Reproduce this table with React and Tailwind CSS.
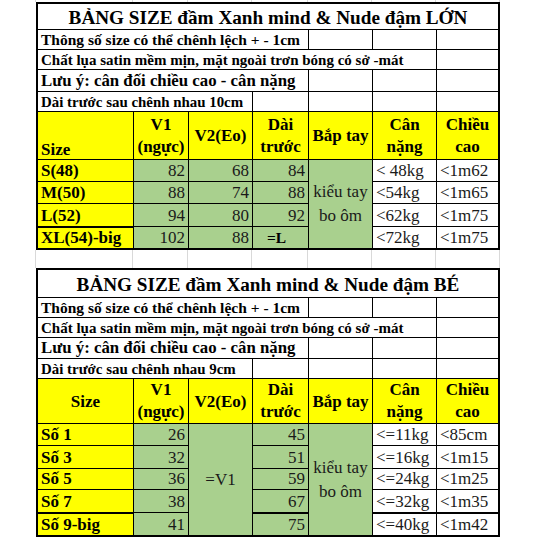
import React from "react";

const Y = "bg-[#ffff00]";
const G = "bg-[#a9d08e]";
const W = "bg-white";

function Cell({ className = "", children }) {
  return <div className={`flex min-w-0 overflow-visible whitespace-nowrap ${className}`}>{children}</div>;
}

function Gap({ h }) {
  return (
    <div className={`flex ${h}`}>
      <div className="w-[36px] border-r border-[#d9d9d9]" />
      <div className="w-[97px] border-r border-[#d9d9d9]" />
      <div className="w-[55px] border-r border-[#d9d9d9]" />
      <div className="w-[64px] border-r border-[#d9d9d9]" />
      <div className="w-[56px] border-r border-[#d9d9d9]" />
      <div className="w-[64px] border-r border-[#d9d9d9]" />
      <div className="w-[64px] border-r border-[#d9d9d9]" />
      <div className="w-[64px] border-r border-[#d9d9d9]" />
    </div>
  );
}

function InfoRows({ dai, cm }) {
  return (
    <>
      <Cell className={`${W} col-span-7 items-center justify-center text-[19.2px] font-bold leading-none pt-[2px]`}>
        BẢNG SIZE đầm Xanh mind &amp; Nude đậm {dai}
      </Cell>
      <Cell className={`${W} col-span-4 items-end pl-[3px] text-[15.5px] font-bold leading-[18px]`}>
        Thông số size có thể chênh lệch + - 1cm
      </Cell>
      <Cell className={W} />
      <Cell className={W} />
      <Cell className={W} />
      <Cell className={`${W} col-span-6 items-end pl-[3px] text-[15px] font-bold leading-[18px]`}>
        Chất lụa satin mềm mịn, mặt ngoài trơn bóng có sở -mát
      </Cell>
      <Cell className={W} />
      <Cell className={`${W} col-span-4 items-end pl-[3px] text-[16.8px] font-bold leading-[20px]`}>
        Lưu ý: cân đối chiều cao - cân nặng
      </Cell>
      <Cell className={W} />
      <Cell className={W} />
      <Cell className={W} />
      <Cell className={`${W} col-span-3 items-end pl-[3px] text-[14.9px] font-bold leading-[18px]`}>
        Dài trước sau chênh nhau {cm}
      </Cell>
      <Cell className={W} />
      <Cell className={W} />
      <Cell className={W} />
      <Cell className={W} />
    </>
  );
}

function Header({ small }) {
  return (
    <>
      <Cell className={`${Y} ${small ? "items-center justify-center" : "items-end pl-[3px] pb-[1px]"} text-[17px] font-bold leading-none`}>
        Size
      </Cell>
      <Cell className={`${Y} flex-col items-center justify-center text-[17px] font-bold leading-[22px]`}>
        <span>V1</span>
        <span>(ngực)</span>
      </Cell>
      <Cell className={`${Y} items-center justify-center text-[17px] font-bold leading-none`}>V2(Eo)</Cell>
      <Cell className={`${Y} flex-col items-center justify-center text-[17px] font-bold leading-[22px]`}>
        <span>Dài</span>
        <span>trước</span>
      </Cell>
      <Cell className={`${Y} items-center justify-center text-[17px] font-bold leading-none`}>Bắp tay</Cell>
      <Cell className={`${Y} flex-col items-center justify-center text-[17px] font-bold leading-[22px]`}>
        <span>Cân</span>
        <span>nặng</span>
      </Cell>
      <Cell className={`${Y} flex-col items-center justify-center text-[17px] font-bold leading-[22px]`}>
        <span>Chiều</span>
        <span>cao</span>
      </Cell>
    </>
  );
}

const big = [
  ["S(48)", "82", "68", "84", "< 48kg", "<1m62"],
  ["M(50)", "88", "74", "88", "<54kg", "<1m65"],
  ["L(52)", "94", "80", "92", "<62kg", "<1m75"],
  ["XL(54)-big", "102", "88", "=L", "<72kg", "<1m75"],
];

const small = [
  ["Số 1", "26", "45", "<=11kg", "<85cm"],
  ["Số 3", "32", "51", "<=16kg", "<1m15"],
  ["Số 5", "36", "59", "<=24kg", "<1m25"],
  ["Số 7", "38", "67", "<=32kg", "<1m35"],
  ["Số 9-big", "41", "75", "<=40kg", "<1m42"],
];

const lab = "items-end pl-[3px] text-[17px] font-bold leading-[20px]";
const num = "items-end justify-end pr-[3px] text-[17px] leading-[20px] text-[#1a1a1a]";
const txt = "items-end pl-[3px] text-[17px] leading-[20px] text-[#1a1a1a]";

export default function App() {
  return (
    <div
      className="w-[539px] h-[539px] overflow-hidden bg-white text-black"
      style={{ fontFamily: '"Liberation Serif", "Times New Roman", serif' }}
    >
      <Gap h="h-[2px]" />
      <div className="pl-[36px]">
        <div className="grid w-[464px] grid-cols-[95px_54px_63px_55px_63px_63px_61px] grid-rows-[25px_19px_19px_21px_19px_47px_21px_21px_22px_21px] gap-px border-2 border-black bg-black">
          <InfoRows dai="LỚN" cm="10cm" />
          <Header />
          {big.map((r, i) => (
            <React.Fragment key={r[0]}>
              <Cell className={`${Y} ${lab} ${i === 3 ? "border-t border-black" : ""}`}>{r[0]}</Cell>
              <Cell className={`${G} ${num}`}>{r[1]}</Cell>
              <Cell className={`${G} ${num}`}>{r[2]}</Cell>
              {i === 3 ? (
                <Cell className={`${G} items-end justify-center pr-[8px] text-[15.5px] font-bold leading-[20px]`}>{r[3]}</Cell>
              ) : (
                <Cell className={`${G} ${num}`}>{r[3]}</Cell>
              )}
              {i === 0 && (
                <Cell className={`${G} row-span-4 flex-col items-center justify-center text-[17px] leading-[24px] text-[#1a1a1a]`}>
                  <span>kiểu tay</span>
                  <span>bo ôm</span>
                </Cell>
              )}
              <Cell className={`${W} ${txt}`}>{r[4]}</Cell>
              <Cell className={`${W} ${txt}`}>{r[5]}</Cell>
            </React.Fragment>
          ))}
        </div>
      </div>
      <Gap h="h-[18px]" />
      <div className="pl-[36px]">
        <div className="grid w-[464px] grid-cols-[95px_54px_63px_55px_63px_63px_61px] grid-rows-[27px_19px_19px_20px_19px_44px_21px_22px_20px_22px_22px] gap-px border-2 border-black bg-black">
          <InfoRows dai="BÉ" cm="9cm" />
          <Header small />
          {small.map((r, i) => (
            <React.Fragment key={r[0]}>
              <Cell className={`${Y} ${lab} ${i === 4 ? "border-t border-black" : ""}`}>{r[0]}</Cell>
              <Cell className={`${G} ${num}`}>{r[1]}</Cell>
              {i === 0 && (
                <Cell className={`${G} row-span-5 items-center justify-center text-[17px] leading-none text-[#1a1a1a]`}>
                  =V1
                </Cell>
              )}
              <Cell className={`${G} ${num} ${i === 4 ? "border-t border-black" : ""}`}>{r[2]}</Cell>
              {i === 0 && (
                <Cell className={`${G} row-span-5 flex-col items-center justify-center text-[17px] leading-[24px] text-[#1a1a1a]`}>
                  <span>kiểu tay</span>
                  <span>bo ôm</span>
                </Cell>
              )}
              <Cell className={`${W} ${txt} ${i === 4 ? "border-t border-black" : ""}`}>{r[3]}</Cell>
              <Cell className={`${W} ${txt} ${i === 4 ? "border-t border-black" : ""}`}>{r[4]}</Cell>
            </React.Fragment>
          ))}
        </div>
      </div>
    </div>
  );
}
